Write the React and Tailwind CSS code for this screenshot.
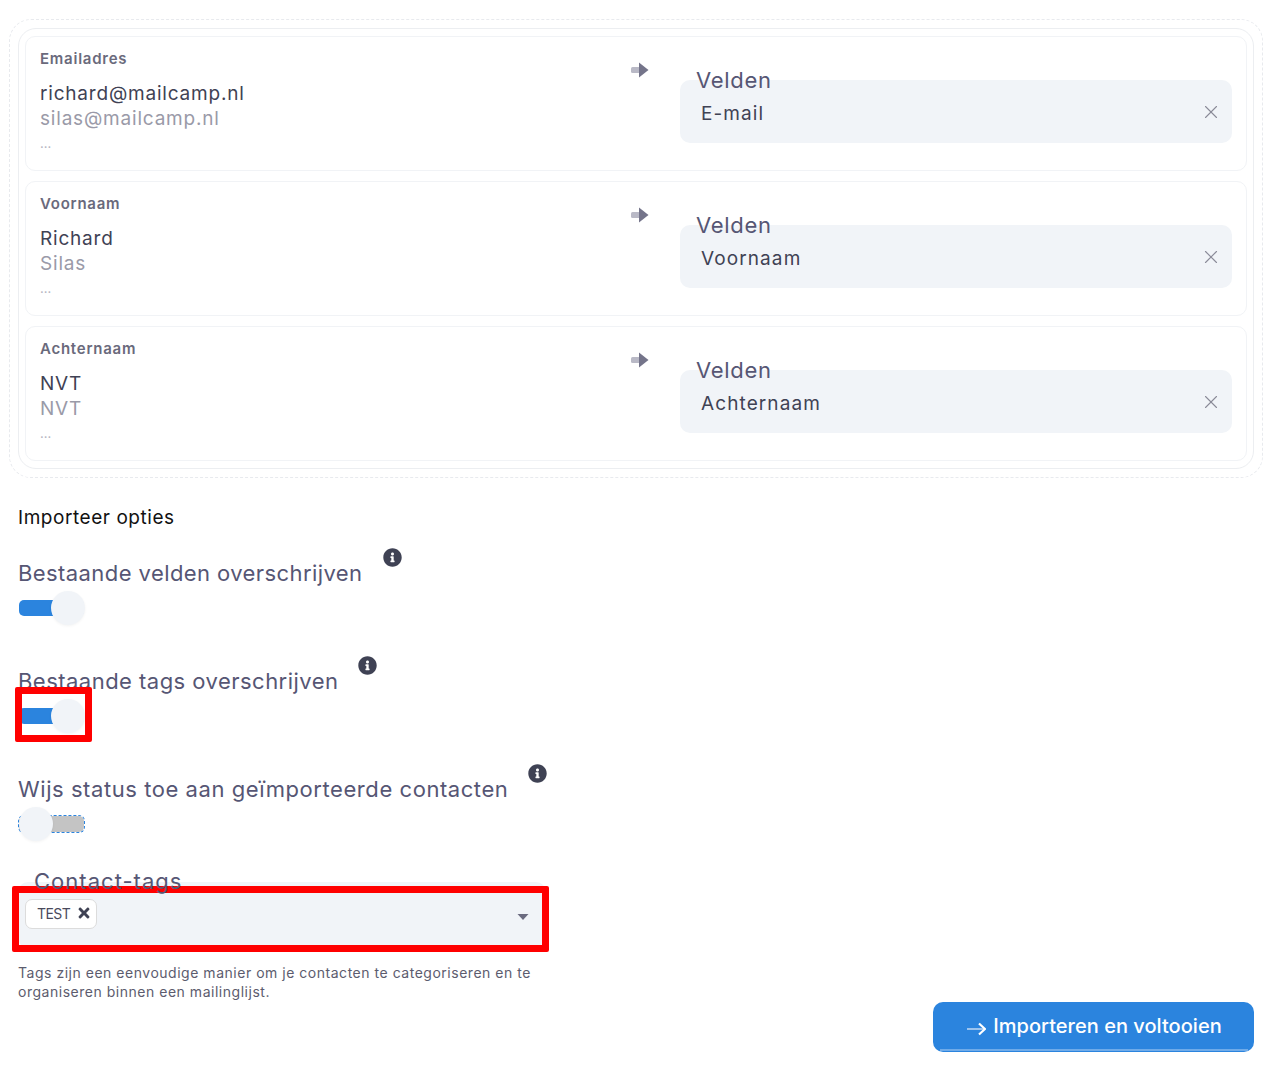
import { X } from 'lucide-react';
import { FaInfoCircle, FaTimes } from 'react-icons/fa';

const ROWS = [
  { title: 'Emailadres', first: 'richard@mailcamp.nl', second: 'silas@mailcamp.nl', field: 'E-mail' },
  { title: 'Voornaam', first: 'Richard', second: 'Silas', field: 'Voornaam' },
  { title: 'Achternaam', first: 'NVT', second: 'NVT', field: 'Achternaam' },
];

function DuoArrow() {
  return (
    <svg width="18" height="16" viewBox="0 0 18 16" className="block">
      <rect x="0" y="5" width="9" height="6" rx="1.5" fill="#b9b9c6" />
      <path d="M8 0.5 L17.5 8 L8 15.5 Z" fill="#74748a" />
    </svg>
  );
}

function MappingRow({ row }) {
  return (
    <div className="flex h-[135px] rounded-[10px] border border-[#f1f3f6] pl-[14px] pr-[14px]">
      <div className="flex-1 pt-[12px]">
        <div className="text-[15px] leading-[20px] font-semibold text-[#6a6a7c] tracking-[0.75px]">{row.title}</div>
        <div className="mt-[13px] text-[19px] leading-[24px] text-[#3f4254] tracking-[0.8px]">{row.first}</div>
        <div className="text-[19px] leading-[25px] text-[#9a9aa8] tracking-[0.8px]">{row.second}</div>
        <div className="mt-[2px] text-[13px] leading-[20px] text-[#b5b5c0]">...</div>
      </div>
      <div className="w-[552px] relative">
        <div className="absolute left-[-49px] top-[25px]"><DuoArrow /></div>
        <div className="pt-[28px] pl-[16px] text-[22px] leading-[30px] text-[#565674] tracking-[0.7px] relative z-10">Velden</div>
        <div className="-mt-[15px] h-[63px] rounded-[10px] bg-[#f1f4f8] flex items-center justify-between pl-[21px] pr-[10px]">
          <span className="pt-[5px] text-[19px] text-[#3f4254] tracking-[1.1px]">{row.field}</span>
          <X size={22} strokeWidth={1.2} color="#8a8a98" />
        </div>
      </div>
    </div>
  );
}

function Toggle({ on }) {
  return (
    <div className="relative mt-[2px] h-[34px] w-[68px] flex items-center">
      <div className={`ml-[1px] h-[16px] w-[65px] rounded-[5px] ${on ? 'bg-[#2b84de]' : 'bg-[#c4c4c4] outline-1 outline-dashed outline-[#2b84de]'}`} />
      <div className={`absolute top-0 h-[34px] w-[34px] rounded-full bg-[#f1f4f8] shadow-[0_1px_3px_rgba(0,0,0,0.05)] ${on ? 'left-[33px]' : 'left-[1px]'}`} />
    </div>
  );
}

function Option({ text, on, tracking, className }) {
  return (
    <div className={className}>
      <div className="flex items-start">
        <span className={`mt-[9px] text-[22px] leading-[32px] text-[#565674] ${tracking}`}>{text}</span>
        <FaInfoCircle className="ml-[20px] shrink-0" size={19} color="#3f4254" />
      </div>
      <Toggle on={on} />
    </div>
  );
}

export default function App() {
  return (
    <div className="relative h-[1066px] bg-white pt-[19px] pl-[9px] pr-[2px] font-['Inter',sans-serif] overflow-hidden">
      <div className="rounded-[22px] border border-dashed border-[#e8eaee] p-[8px]">
        <div className="rounded-[18px] border border-[#eceef1] px-[6px] pt-[7px] pb-[7px] flex flex-col gap-[10px]">
          {ROWS.map(row => <MappingRow key={row.title} row={row} />)}
        </div>
      </div>

      <div className="pl-[9px]">
        <div className="mt-[27px] text-[19px] leading-[26px] text-[#111] tracking-[0.55px]">Importeer opties</div>

        <Option className="mt-[17px]" text="Bestaande velden overschrijven" tracking="tracking-[0.42px]" on />
        <Option className="mt-[31px]" text="Bestaande tags overschrijven" tracking="tracking-[0.47px]" on />
        <Option className="mt-[31px]" text="Wijs status toe aan geïmporteerde contacten" tracking="tracking-[0.56px]" />

        <div className="mt-[25px] w-[528px]">
          <div className="relative z-10 pl-[16px] text-[22px] leading-[30px] text-[#565674] tracking-[1.03px]">Contact-tags</div>
          <div className="-mt-[14px] h-[66px] rounded-[10px] bg-[#f1f4f8] flex items-start justify-between pl-[7px] pr-[17px] pt-[17px]">
            <div className="flex items-center h-[30px] w-[72px] rounded-[7px] border border-[#dcdcdc] bg-white pl-[11px] pb-[2px] gap-[6px]">
              <span className="text-[14px] text-[#4a4a5c] tracking-[-0.6px]">TEST</span>
              <FaTimes size={16} color="#3f4254" />
            </div>
            <svg width="12" height="6" viewBox="0 0 12 6" className="mt-[15px]"><path d="M0.5 0 H11.5 L6 6 Z" fill="#6b6b80" /></svg>
          </div>
        </div>

        <p className="mt-[15px] w-[530px] text-[14px] leading-[19px] text-[#5c5c6e] tracking-[0.52px]">
          Tags zijn een eenvoudige manier om je contacten te categoriseren en te organiseren binnen een mailinglijst.
        </p>
      </div>

      <div className="mt-[1px] flex justify-end pr-[9px]">
        <div className="relative flex h-[50px] w-[321px] items-center justify-center gap-[7px] rounded-[10px] bg-[#2b84de] pb-[2px]">
          <svg width="21" height="14" viewBox="0 0 21 14" className="mt-[6px]">
            <path d="M2 7 H19" stroke="#9cc4ef" strokeWidth="2" />
            <path d="M14 1.5 L20 7 L14 12.5" stroke="#fff" strokeWidth="2.2" fill="none" />
          </svg>
          <span className="text-[20px] font-medium text-white tracking-[0.03px]">Importeren en voltooien</span>
          <div className="absolute bottom-[1px] left-[7px] right-[6px] h-[2px] bg-[#6fabe9]" />
        </div>
      </div>

      {/* red annotation frames */}
      <div className="absolute left-[15px] top-[687px] h-[55px] w-[77px] rounded-[2px] border-[7px] border-[#ff0000]" />
      <div className="absolute left-[12px] top-[886px] h-[66px] w-[537px] rounded-[2px] border-[7px] border-[#ff0000]" />
    </div>
  );
}
